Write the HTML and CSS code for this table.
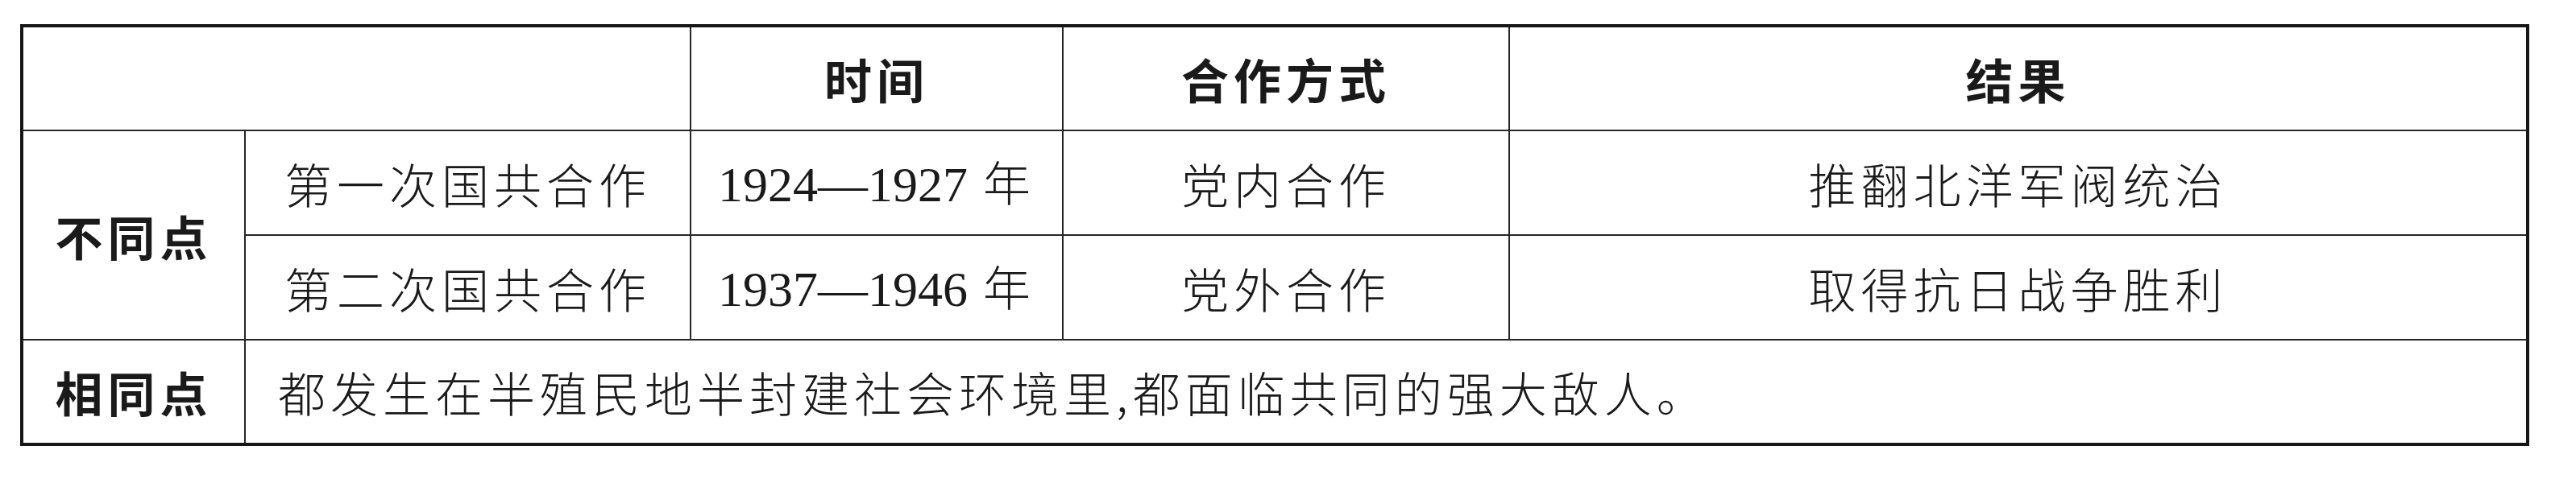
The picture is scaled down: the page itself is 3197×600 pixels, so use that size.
FILE: index.html
```html
<!DOCTYPE html>
<html lang="zh-CN">
<head>
<meta charset="utf-8">
<title>国共合作比较</title>
<link rel="stylesheet" href="styles.css">
</head>
<body>
<table class="cmp">
  <colgroup>
    <col class="c1">
    <col class="c2">
    <col class="c3">
    <col class="c4">
    <col class="c5">
  </colgroup>
  <tr>
    <th colspan="2"></th>
    <th>时间</th>
    <th>合作方式</th>
    <th>结果</th>
  </tr>
  <tr>
    <th rowspan="2">不同点</th>
    <td>第一次国共合作</td>
    <td><span class="num">1924—1927</span> 年</td>
    <td>党内合作</td>
    <td>推翻北洋军阀统治</td>
  </tr>
  <tr>
    <td>第二次国共合作</td>
    <td><span class="num">1937—1946</span> 年</td>
    <td>党外合作</td>
    <td>取得抗日战争胜利</td>
  </tr>
  <tr>
    <th>相同点</th>
    <td colspan="4" class="left">都发生在半殖民地半封建社会环境里,都面临共同的强大敌人。</td>
  </tr>
</table>
</body>
</html>
```

FILE: styles.css
```css
html, body {
  margin: 0;
  padding: 0;
  background: #ffffff;
}

body {
  padding: 30px 0 0 25px;
}

.cmp {
  border-collapse: collapse;
  table-layout: fixed;
  width: 3110px;
  border: 4px solid #161616;
  font-family: "Noto Sans CJK SC", "Noto Sans", sans-serif;
  color: #1a1a1a;
}

.c1 { width: 277px; }
.c2 { width: 553px; }
.c3 { width: 462px; }
.c4 { width: 554px; }
.c5 { width: 1264px; }

.cmp tr {
  height: 130px;
}

.cmp th,
.cmp td {
  border: 2px solid #262626;
  padding: 0;
  text-align: center;
  vertical-align: middle;
  font-size: 59px;
  letter-spacing: 6px;
  line-height: 1;
  white-space: nowrap;
}

.cmp th {
  font-weight: 700;
}

.cmp td {
  font-weight: 300;
}

.cmp td.left {
  text-align: left;
  padding-left: 40px;
}

.num {
  font-family: "Liberation Serif", "Times New Roman", serif;
  font-size: 62px;
  font-weight: 400;
  letter-spacing: 0;
}
```
